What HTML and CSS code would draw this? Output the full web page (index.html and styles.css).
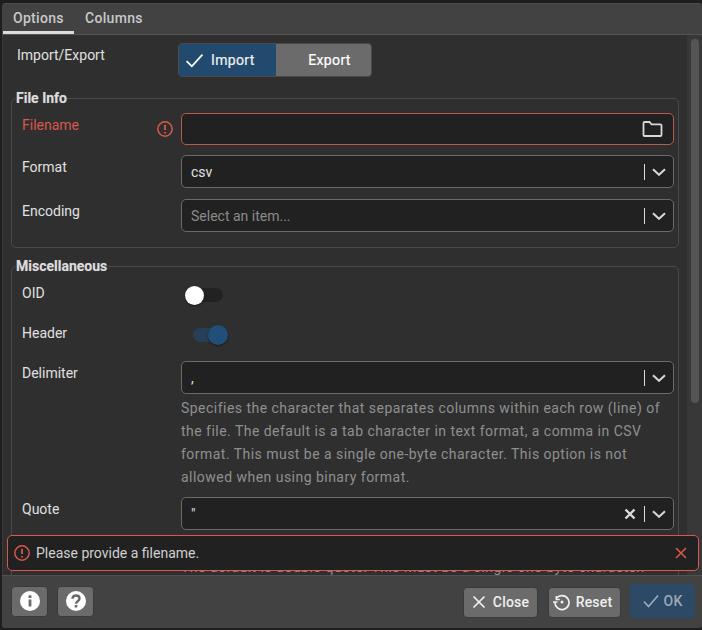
FILE: index.html
```html
<!DOCTYPE html>
<html lang="en">
<head>
<meta charset="utf-8">
<title>Import/Export</title>
<link rel="stylesheet" href="styles.css">
</head>
<body>
<div class="dialog">
  <nav class="tabs">
    <span class="tab active">Options</span>
    <span class="tab">Columns</span>
  </nav>
  <main class="body">
    <div class="scroll">
      <div class="row top">
        <label class="lab">Import/Export</label>
        <div class="toggle">
          <span class="seg on"><svg class="ck" viewBox="0 0 18 14"><path d="M1.5 7.5 6.5 12.5 16.5 1.5"/></svg>Import</span>
          <span class="seg off">Export</span>
        </div>
      </div>
      <fieldset class="fs first">
        <legend>File Info</legend>
        <div class="row r1">
          <label class="lab err">Filename</label>
          <svg class="erricon" viewBox="0 0 18 18"><circle cx="9" cy="9" r="7.2"/><path d="M9 4.8v5.2M9 12v1.6"/></svg>
          <div class="input invalid">
            <svg class="folder" viewBox="0 0 20 16"><path d="M1 14V2.2C1 1.5 1.5 1 2.2 1H7l2 2.4h8.8c.7 0 1.2.5 1.2 1.2V14c0 .6-.5 1-1.2 1H2c-.6 0-1-.4-1-1Z"/></svg>
          </div>
        </div>
        <div class="row r2">
          <label class="lab">Format</label>
          <div class="input sel"><span class="val">csv</span><i class="bar"></i><svg class="chev" viewBox="0 0 14 8"><path d="M1 1.2 7 6.8 13 1.2"/></svg></div>
        </div>
        <div class="row r3">
          <label class="lab">Encoding</label>
          <div class="input sel"><span class="val ph">Select an item...</span><i class="bar"></i><svg class="chev" viewBox="0 0 14 8"><path d="M1 1.2 7 6.8 13 1.2"/></svg></div>
        </div>
      </fieldset>
      <fieldset class="fs misc">
        <legend>Miscellaneous</legend>
        <div class="row sw1">
          <label class="lab">OID</label>
          <span class="switch"><span class="knob"></span></span>
        </div>
        <div class="row sw2">
          <label class="lab">Header</label>
          <span class="switch checked"><span class="knob"></span></span>
        </div>
        <div class="row r4">
          <label class="lab">Delimiter</label>
          <div class="input sel"><span class="val">,</span><i class="bar"></i><svg class="chev" viewBox="0 0 14 8"><path d="M1 1.2 7 6.8 13 1.2"/></svg></div>
        </div>
        <p class="help">Specifies the character that separates columns within each row (line) of the file. The default is a tab character in text format, a comma in CSV format. This must be a single one-byte character. This option is not allowed when using binary format.</p>
        <div class="row r5">
          <label class="lab">Quote</label>
          <div class="input sel"><span class="val">"</span><svg class="clear" viewBox="0 0 12 12"><path d="M1.5 1.5 10.500 10.500M10.500 1.500 1.500 10.500"/></svg><i class="bar"></i><svg class="chev" viewBox="0 0 14 8"><path d="M1 1.2 7 6.8 13 1.2"/></svg></div>
        </div>
        <p class="help h2">Specifies the quoting character to be used when a data value is quoted. The default is double-quote. This must be a single one-byte character.</p>
      </fieldset>
    </div>
    <div class="track"><div class="thumb"></div></div>
    <div class="alert">
      <svg class="alerticon" viewBox="0 0 18 18"><circle cx="9" cy="9" r="7.2"/><path d="M9 4.800v5.200M9 12v1.600"/></svg>
      <span class="msg">Please provide a filename.</span>
      <svg class="alertx" viewBox="0 0 12 12"><path d="M1 1 11 11M11 1 1 11"/></svg>
    </div>
  </main>
  <footer class="foot">
    <button class="btn sq"><svg viewBox="0 0 20 20"><circle class="fillw" cx="10" cy="10" r="10"/><path class="fillk" d="M8.600 8.400h2.800v7h-2.800zM8.600 4.300h2.800v2.700h-2.800z"/></svg></button>
    <button class="btn sq"><svg viewBox="0 0 20 20"><circle class="fillw" cx="10" cy="10" r="10"/><path class="strokek" d="M6.500 7.800c0-2 1.500-3.300 3.500-3.300s3.500 1.300 3.500 3c0 2.700-3.500 2.600-3.500 5.200"/><path class="fillk" d="M8.700 14h2.600v2.400H8.700z"/></svg></button>
    <span class="spacer"></span>
    <button class="btn act close"><svg class="ic" viewBox="0 0 14 14"><path d="M1.500 1.500 12.500 12.500M12.500 1.500 1.500 12.500"/></svg>Close</button>
    <button class="btn act reset"><svg class="ic rs" viewBox="0 0 18 18"><path d="M3.500 5.200A7 7 0 1 1 2 9"/><path d="M0 9h4.500M3.300 3v3.500h3.500" class="thin"/><circle cx="9" cy="9" r="1.500" class="dot"/></svg>Reset</button>
    <button class="btn ok"><svg class="ic" viewBox="0 0 16 14"><path d="M1 7.500 5.500 12.500 15 1.500"/></svg>OK</button>
  </footer>
</div>
</body>
</html>
```
FILE: styles.css
```css
* { box-sizing: border-box; }
html, body { margin: 0; height: 630px; overflow: hidden; background: #1e1e1e; }
body { font-family: Roboto, "Liberation Sans", sans-serif; font-size: 14px; color: #e0e0e0; }

.dialog { margin: 3px 0 0 2px; width: 700px; height: 625px; display: flex; flex-direction: column; background: #2f2f2f; border-top: 1px solid #4a4a4a; border-radius: 3px; overflow: hidden; }

.tabs { height: 31px; flex: none; display: flex; background: #424242; border-bottom: 1px solid #525252; }
.tab { height: 30px; padding: 5px 11px 0 11px; font-size: 14px; font-weight: 500; letter-spacing: .3px; color: #c9c9c9; line-height: 19px; }
.tab.active { width: 71px; margin-left: 1px; padding-left: 10px; border-bottom: 3px solid #dcdcdc; padding-top: 5px; }

.body { position: relative; flex: none; height: 540px; overflow: hidden; background: #2f2f2f; border-left: 1px solid #3a3a3a; }
.scroll { padding: 8px 22px 0 8px; }

.row { display: flex; align-items: flex-start; position: relative; }
.lab { display: block; width: 159px; flex: none; line-height: 20px; color: #e0e0e0; }
.row.top { height: 34px; padding-left: 6px; }
.row.top .lab { width: 161px; padding-top: 2px; }

.toggle { width: 194px; height: 34px; display: flex; border-radius: 4px; overflow: hidden; border: 1px solid #4a4a4a; color: #fff; }
.seg { display: flex; align-items: center; height: 100%; font-size: 14px; font-weight: 400; letter-spacing: .35px; -webkit-text-stroke: .2px; }
.seg.on { width: 97px; background: #224a6e; color: #f0f0f0; padding-left: 6px; }
.seg.off { flex: 1; justify-content: center; background: #6b6b6b; padding-left: 12px; }
.ck { width: 19px; height: 15px; margin-right: 7px; fill: none; stroke: #fff; stroke-width: 1.700; }

.fs { margin: 0; padding: 0 4px 0 10px; border: 1px solid #4a4a4a; border-radius: 5px; min-width: 0; width: 668px; }
.fs legend { padding: 0; margin-left: -6px; font-size: 14px; font-weight: 700; line-height: 17px; color: #dcdcdc; text-shadow: 0 0 1px rgba(255,255,255,.35); }
.fs.first { margin-top: 13px; height: 158px; }
.fs.misc { margin-top: 10px; height: 400px; }

.r1 { margin-top: 6px; height: 32px; }
.r1 .lab { color: #d9574c; width: 134px; padding-top: 2px; }
.r2 { margin-top: 10px; }
.r3 { margin-top: 11px; }
.r2 .lab, .r3 .lab { padding-top: 2px; }
.erricon, .alerticon { fill: none; stroke: #d9574c; stroke-width: 1.500; }
.erricon { width: 18px; height: 18px; margin: 7px 7px 0 0; flex: none; }
.erricon path, .alerticon path { stroke-width: 1.800; }

.input { width: 493px; height: 33px; flex: none; display: flex; align-items: center; background: #212121; border: 1px solid #6a6a6a; border-radius: 5px; padding: 0 7px 0 9px; color: #e0e0e0; font-size: 14px; }
.input.invalid { height: 32px; border-color: #b9584d; justify-content: flex-end; padding-right: 10px; }
.folder { width: 21px; height: 16px; fill: none; stroke: #d8d8d8; stroke-width: 1.800; }
.val { flex: 1; }
.ph { color: #8a8a8a; }
.bar { width: 1px; height: 16px; background: #dcdcdc; margin: 0 7px 0 8px; flex: none; }
.chev { width: 14px; height: 8px; fill: none; stroke: #d8d8d8; stroke-width: 2; flex: none; }
.clear { width: 12px; height: 12px; fill: none; stroke: #dcdcdc; stroke-width: 2.400; flex: none; }

.sw1 { margin-top: 9px; height: 29px; }
.sw2 { margin-top: 11px; height: 26px; }
.sw1 .lab, .sw2 .lab { margin-top: -1px; }
.switch { position: relative; margin: 4px 0 0 4px; width: 38px; height: 14px; border-radius: 7px; background: #222; display: block; }
.knob { position: absolute; left: 0; top: -2px; width: 19px; height: 19px; border-radius: 50%; background: #fff; box-shadow: 0 1px 2px rgba(0,0,0,.5); }
.switch.checked { margin-left: 12px; width: 30px; background: #263f56; }
.switch.checked .knob { left: auto; right: -5px; background: #224f7a; top: -3px; width: 20px; height: 20px; }
.r4 { margin-top: 11px; }
.r4 .lab, .r5 .lab { padding-top: 2px; }
.help { margin: 2px 0 0 159px; width: 493px; font-size: 14px; line-height: 23px; letter-spacing: .47px; color: #8f8f8f; height: 94px; padding-top: 1px; }
.r5 { margin-top: 7px; }
.h2 { height: auto; }

.track { position: absolute; right: 0; top: 0; bottom: 0; width: 15px; background: #383838; }
.thumb { position: absolute; left: 4px; top: 4px; width: 8px; height: 364px; border-radius: 4px; background: #555; }

.alert { position: absolute; left: 4px; right: 3px; top: 500px; height: 36px; display: flex; align-items: center; background: #212121; border: 1px solid #d9574c; border-radius: 5px; padding: 0 10px 0 5px; }
.alerticon { width: 18px; height: 18px; flex: none; margin-right: 4px; }
.msg { flex: 1; color: #d0d0d0; font-size: 14px; padding-left: 1px; }
.alertx { width: 12px; height: 12px; fill: none; stroke: #d9574c; stroke-width: 1.600; margin-right: 1px; }

.foot { flex: 1; display: flex; align-items: center; background: #424242; padding: 0 7px 0 9px; border-top: 1px solid #505050; }
.spacer { flex: 1; }
.btn { font: 500 14px Roboto, "Liberation Sans", sans-serif; letter-spacing: .2px; border: 1px solid #3a3a3a; background: #6b6b6b; color: #f0f0f0; border-radius: 4px; display: flex; align-items: center; justify-content: center; padding: 0; height: 31px; }
.sq { width: 37px; margin: -2px 9px 0 0; height: 31px; }
.sq svg { width: 20px; height: 20px; }
.fillw { fill: #fff; }
.fillk { fill: #6b6b6b; }
.strokek { fill: none; stroke: #6b6b6b; stroke-width: 2.400; }
.ic { width: 14px; height: 14px; margin-right: 7px; fill: none; stroke: #f0f0f0; stroke-width: 1.700; }
.close { width: 75px; margin-right: 10px; }
.reset { width: 73px; margin-right: 9px; }
.rs { width: 18px; height: 18px; margin-right: 5px; margin-left: -4px; }
.dot { fill: #f0f0f0; stroke: none; }
.thin { stroke-width: 1.500; }
.ok { width: 65px; height: 34px; background: #2c4a66; border-color: #2c4a66; color: #9aa9b6; margin-top: -2px; }
.ok .ic { stroke: #9aa9b6; width: 16px; height: 14px; margin-right: 5px; }
```
